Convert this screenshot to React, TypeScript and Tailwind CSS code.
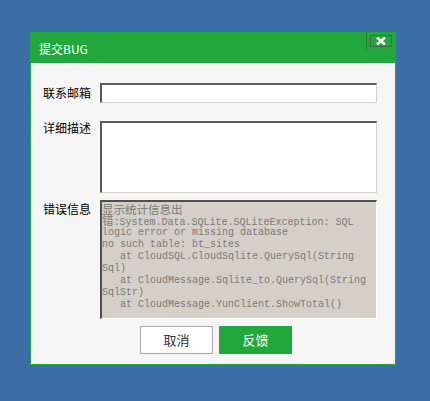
import React from "react";

const cjk = "font-['Noto_Sans_CJK_SC',sans-serif]";
const mono = "font-['Liberation_Mono','Noto_Sans_CJK_SC',monospace]";

const errLines = [
  "错:System.Data.SQLite.SQLiteException: SQL",
  "logic error or missing database",
  "no such table: bt_sites",
  "   at CloudSQL.CloudSqlite.QuerySql(String",
  "Sql)",
  "   at CloudMessage.Sqlite_to.QuerySql(String",
  "SqlStr)",
  "   at CloudMessage.YunClient.ShowTotal()",
];

export default function App() {
  return (
    <div className={`w-[430px] h-[401px] bg-[#3a6ea5] pt-[32px] pl-[30px] ${cjk}`}>
      <div className="w-[366px]">
        {/* title bar */}
        <div className="h-[31px] bg-[#21a73b] flex items-start justify-between">
          <span className="text-white text-[12px] leading-none mt-[11px] ml-[9px]">提交BUG</span>
          <div className="flex items-start h-[18px]">
            <div className="w-px h-[18px] bg-[#1a8a30]" />
            <div className="ml-[3px] mt-[3px] mr-[4px] w-[22px] h-[12px] border border-[#5a5a5a] flex items-center justify-center">
              <svg width="12" height="8" viewBox="0 0 12 8">
                <path d="M2 0.5 L10 7.5 M10 0.5 L2 7.5" stroke="#fff" strokeWidth="2.6" />
              </svg>
            </div>
          </div>
        </div>

        {/* body */}
        <div className="h-[302px] bg-[#f6f6f6] border-x border-b border-[#21a73b] pl-[12px] pt-[20px] text-[12px] text-black">
          <div className="flex items-center">
            <span className="w-[57px] leading-none">联系邮箱</span>
            <div className="w-[277px] h-[20px] bg-white border-t-2 border-l-2 border-t-[#5a5a5a] border-l-[#5a5a5a] border-b border-r border-b-[#d4d0c8] border-r-[#d4d0c8]" />
          </div>

          <div className="flex items-start mt-[18px]">
            <span className="w-[57px] leading-none mt-[1px]">详细描述</span>
            <div className="w-[277px] h-[72px] bg-white border-t-2 border-l-2 border-t-[#5a5a5a] border-l-[#5a5a5a] border-b border-r border-b-[#d4d0c8] border-r-[#d4d0c8]" />
          </div>

          <div className="flex items-start mt-[7px]">
            <span className="w-[57px] leading-none mt-[3px]">错误信息</span>
            <div className="w-[277px] h-[119px] bg-[#d4d0c8] border-t-2 border-l-2 border-t-[#505050] border-l-[#505050] border-b border-r border-b-white border-r-white overflow-hidden pt-[1px]">
              <div className="h-[12px] text-[11.5px] leading-[12px] text-[#7a7a7a]">显示统计信息出</div>
              {errLines.map((l, i) => (
                <div key={i} className={`${mono} h-[12px] text-[10px] leading-[12px] text-[#7a7a7a] whitespace-pre`}>
                  {l.startsWith("错") ? (
                    <>
                      <span className={`${cjk} text-[11.5px] leading-none`}>错</span>
                      {l.slice(1)}
                    </>
                  ) : (
                    l
                  )}
                </div>
              ))}
            </div>
          </div>

          <div className="flex gap-[6px] mt-[7px] ml-[97px]">
            <button className="w-[73px] h-[28px] bg-white border border-[#aaaaaa] text-[#333] text-[13px]">取消</button>
            <button className="w-[73px] h-[28px] bg-[#21a73b] text-white text-[13px]">反馈</button>
          </div>
        </div>
      </div>
    </div>
  );
}
